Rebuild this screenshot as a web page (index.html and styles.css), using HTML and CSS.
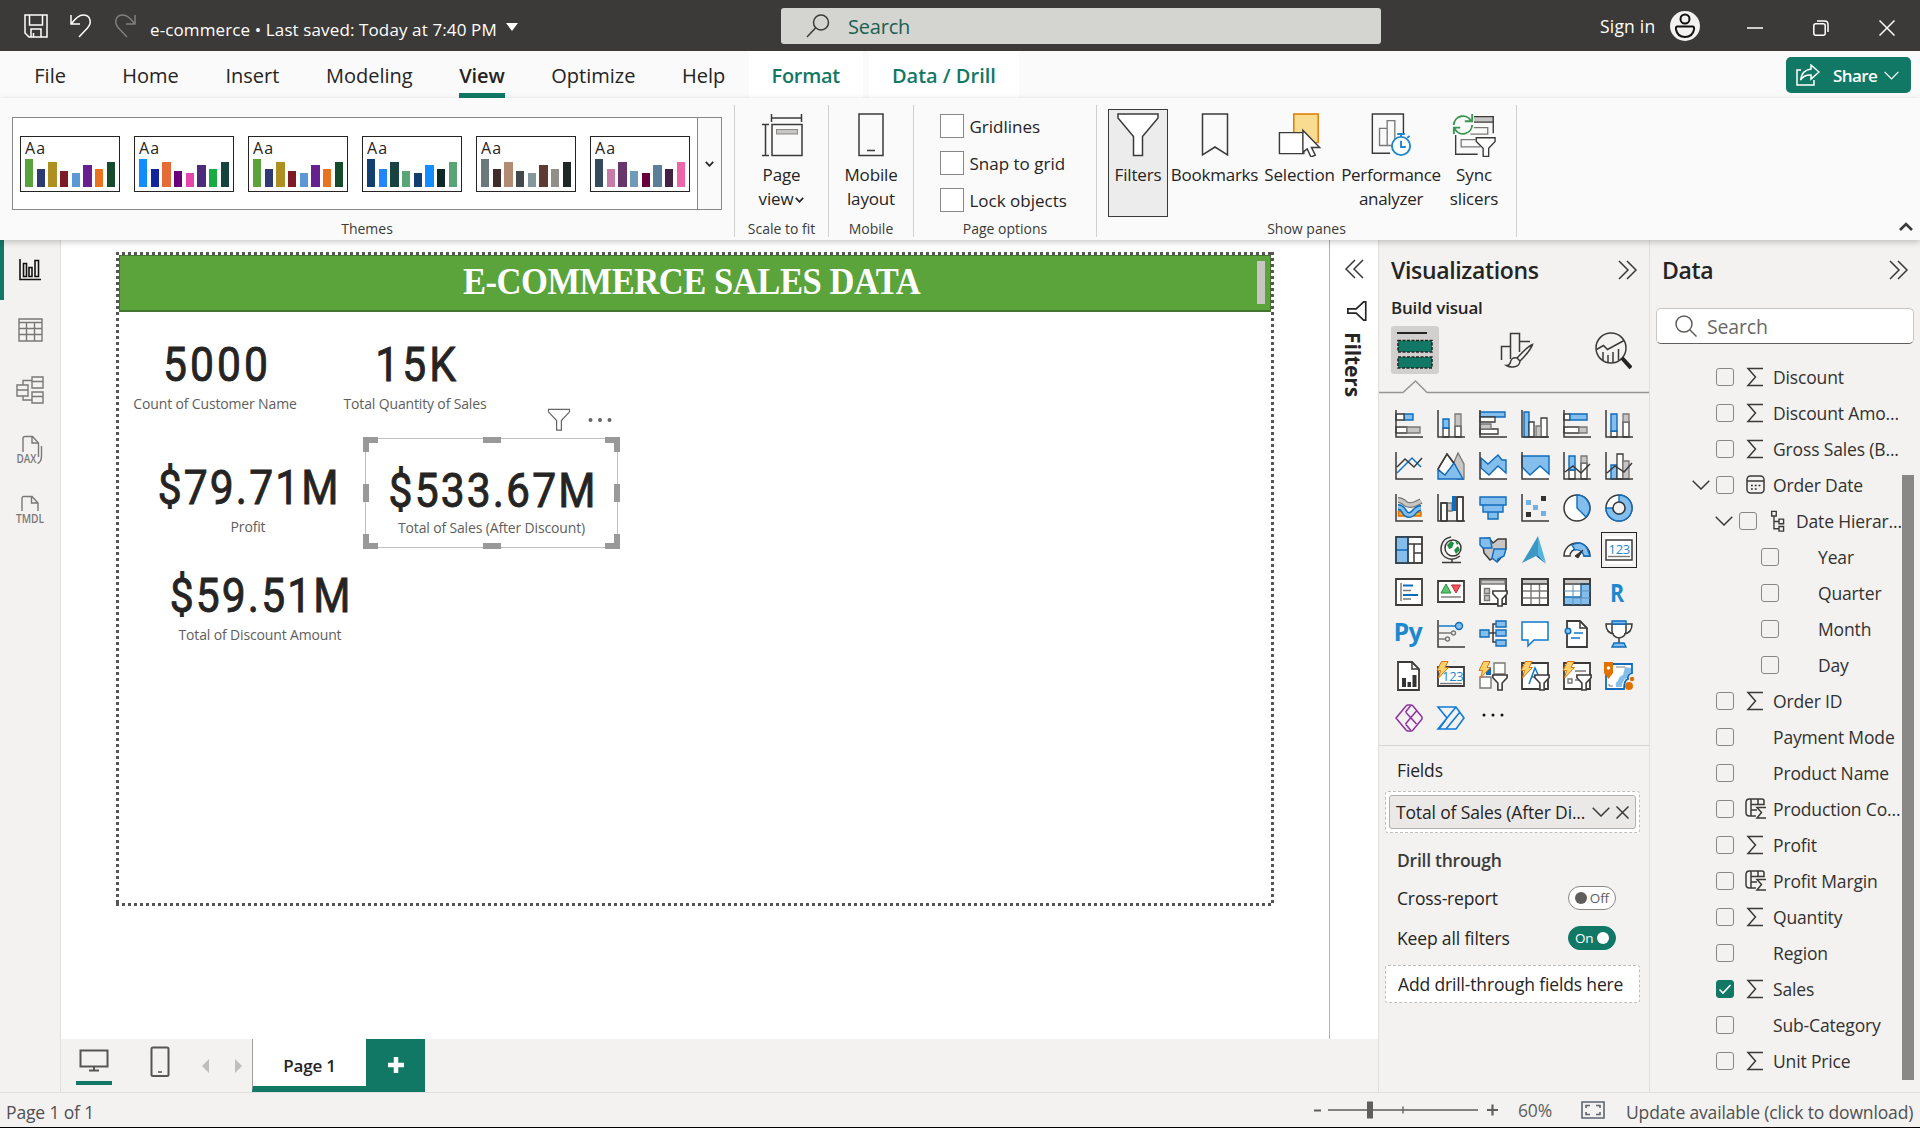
FILE: index.html
```html
<!DOCTYPE html>
<html lang="en">
<head>
<meta charset="utf-8">
<title>e-commerce</title>
<link rel="stylesheet" href="styles.css">
</head>
<body>
<svg class="defs" width="0" height="0" aria-hidden="true">
  <symbol id="sigma" viewBox="0 0 22 22"><path class="k" d="M18 2.500H3L10.500 11 3 19.500H18"/></symbol>
  <symbol id="chev" viewBox="0 0 18 10"><path class="k" d="M.7.7 9 9 17.300.7"/></symbol>
  <symbol id="dbl" viewBox="0 0 20 20"><path class="k" d="M1 1l9 9-9 9M9 1l9 9-9 9"/></symbol>
  <symbol id="measure" viewBox="0 0 22 22"><path class="k" d="M11 18H4.500Q1 18 1 14.500V4.500Q1 1 4.500 1H17q2 0 2 2v3.500H6M6 1v17M6 12h6M13 1v5.500M21 9.500h-9l4.500 5-4.500 5.500h9"/></symbol>
  <symbol id="funnel" viewBox="0 0 24 24"><path d="M1 1.500h22v2.500l-8.500 9v10h-5v-10L1 4z"/></symbol>
  <symbol id="bolt" viewBox="0 0 14 18"><path d="M5.500.5H12L9 6.500h3.500L2.500 17l2-7.500H1z" fill="#fbd16b" stroke="#d9730d"/></symbol>
  <symbol id="minifunnel" viewBox="0 0 15 16"><path d="M.8 1h13.400v2.500L9.500 8.500V15h-4V8.500L.8 3.500z" fill="#fff" stroke="#3b3a39" stroke-width="1.500"/></symbol>
</svg>

<header class="titlebar">
  <div class="quick">
    <svg width="24" height="24" viewBox="0 0 24 24"><path class="w" d="M1 1h22v22H5l-4-4zM5.500 1v10h13V1M7 23v-8h10v8M9.500 19v4"/></svg>
    <svg width="22" height="24" viewBox="0 0 22 24"><path class="w" d="M1 1v9h9M1.500 9.500Q8 1 13 1c8 0 9 8 4.500 13L9 23"/></svg>
    <svg class="dim" width="22" height="24" viewBox="0 0 22 24"><path class="w" d="M21 1v9h-9M20.500 9.500Q14 1 9 1C1 1 0 9 4.500 14L13 23"/></svg>
  </div>
  <div class="doc">e-commerce • Last saved: Today at 7:40 PM</div>
  <i class="tri"></i>
  <div class="topsearch">
    <svg width="24" height="24" viewBox="0 0 24 24"><circle class="k" cx="15" cy="8.500" r="7.500"/><path class="k" d="M9.500 14 1 23"/></svg>
    <span>Search</span>
  </div>
  <div class="signin">Sign in</div>
  <svg class="avatar" width="30" height="30" viewBox="0 0 30 30"><circle cx="15" cy="15" r="15" fill="#f3f2f1"/><g fill="none" stroke="#111" stroke-width="2"><circle cx="15" cy="8" r="4.500"/><path d="M7.500 15.500h15q2 0 1.500 3c-1 5-4.500 7.500-9 7.500s-8-2.500-9-7.500q-.5-3 1.500-3z"/></g></svg>
  <svg class="winmin" width="16" height="16" viewBox="0 0 16 16"><path class="w" d="M0 8h16"/></svg>
  <svg class="winmax" width="16" height="16" viewBox="0 0 16 16"><rect class="w" x=".8" y="3.800" width="11.400" height="11.400" rx="2"/><path class="w" d="M4 1h7.500q3.500 0 3.500 3.500V12"/></svg>
  <svg class="winclose" width="16" height="16" viewBox="0 0 16 16"><path class="w" d="M.5.500l15 15M15.500.500l-15 15"/></svg>
</header>

<nav class="tabs">
  <span>File</span><span>Home</span><span>Insert</span><span>Modeling</span><span class="active">View</span><span>Optimize</span><span>Help</span>
  <span class="ctx">Format</span><span class="ctx">Data / Drill</span>
  <button class="share"><svg width="24" height="22" viewBox="0 0 24 22"><path class="w" d="M5 6H1v15h17v-5M15 1l8 7-8 7v-4q-7-.5-10.500 5Q6 6 15 5z"/></svg>Share<svg width="15" height="9" viewBox="0 0 18 10"><path class="w" d="M.7.700 9 9 17.300.700"/></svg></button>
</nav>

<section class="ribbon">
  <div class="group themes">
    <div class="gallery">
      <div class="theme"><b>Aa</b><div class="bars"><i style="background:#5aa33a"></i><i style="background:#2e3a71"></i><i style="background:#ae9022"></i><i style="background:#7d1c27"></i><i style="background:#5c98d6"></i><i style="background:#662090"></i><i style="background:#e97320"></i><i style="background:#154a2c"></i></div></div>
      <div class="theme"><b>Aa</b><div class="bars"><i style="background:#118dff"></i><i style="background:#12239e"></i><i style="background:#e66c37"></i><i style="background:#6b007b"></i><i style="background:#e645ab"></i><i style="background:#4a2c7a"></i><i style="background:#1aab40"></i><i style="background:#15443d"></i></div></div>
      <div class="theme"><b>Aa</b><div class="bars"><i style="background:#5aa33a"></i><i style="background:#2e3a71"></i><i style="background:#ae9022"></i><i style="background:#7d1c27"></i><i style="background:#5c98d6"></i><i style="background:#662090"></i><i style="background:#e97320"></i><i style="background:#154a2c"></i></div></div>
      <div class="theme"><b>Aa</b><div class="bars"><i style="background:#123f70"></i><i style="background:#2486ff"></i><i style="background:#1a433f"></i><i style="background:#59a576"></i><i style="background:#123f70"></i><i style="background:#118dff"></i><i style="background:#0b2a27"></i><i style="background:#59a576"></i></div></div>
      <div class="theme"><b>Aa</b><div class="bars"><i style="background:#6b787b"></i><i style="background:#3d2c29"></i><i style="background:#b18c72"></i><i style="background:#42494a"></i><i style="background:#85979d"></i><i style="background:#5e3a33"></i><i style="background:#928f88"></i><i style="background:#1f2626"></i></div></div>
      <div class="theme"><b>Aa</b><div class="bars"><i style="background:#344b5b"></i><i style="background:#c77ba7"></i><i style="background:#69366c"></i><i style="background:#6f9bb8"></i><i style="background:#67003a"></i><i style="background:#5c7f99"></i><i style="background:#432144"></i><i style="background:#ee64a9"></i></div></div>
      <div class="more"><svg width="9" height="6" viewBox="0 0 9 6"><path class="k2" d="M.8.800l3.700 4 3.700-4"/></svg></div>
    </div>
    <em>Themes</em>
  </div>
  <div class="group scale">
    <div class="btn">
      <svg width="42" height="44" viewBox="0 0 42 44"><path class="k" d="M10.500 1v8M40.500 1v8M10.500 5h30M1 11.500h7M1 42.500h7M4.500 11.500v31M11 11.500h30v31H11z"/><rect x="15.500" y="16.500" width="21" height="4.500" fill="#c8c6c4" stroke="#8a8886"/></svg>
      <span>Page<br>view<svg class="tiny" width="9" height="6" viewBox="0 0 9 6"><path class="k2" d="M.8.800l3.700 4 3.700-4"/></svg></span>
    </div>
    <em>Scale to fit</em>
  </div>
  <div class="group mobile">
    <div class="btn">
      <svg width="28" height="44" viewBox="0 0 28 44"><path class="k" d="M2 1h24v41.500H2zM10 37.500h8"/></svg>
      <span>Mobile<br>layout</span>
    </div>
    <em>Mobile</em>
  </div>
  <div class="group options">
    <div class="opts">
      <label><i></i>Gridlines</label>
      <label><i></i>Snap to grid</label>
      <label><i></i>Lock objects</label>
    </div>
    <em>Page options</em>
  </div>
  <div class="group panes">
    <div class="btns">
      <div class="btn on"><svg width="42" height="44" viewBox="0 0 42 44"><path class="k" fill="#fff" d="M1 1h40v4L25.500 23.500V42.500h-9V23.500L1 5z"/></svg><span>Filters</span></div>
      <div class="btn b2"><svg width="28" height="44" viewBox="0 0 28 44"><path class="k" d="M1.500 1h25v41L14 34 1.500 42z"/></svg><span>Bookmarks</span></div>
      <div class="btn b3"><svg width="46" height="46" viewBox="0 0 46 46"><path d="M16.500 1H42v30H16.500z" fill="#f9dc8f" stroke="#e07800" stroke-width="1.500"/><path d="M1.500 20.500H27v22H1.500z" fill="#fff" class="k"/><path d="M26 18l17.500 18H35l4 8-4.500 2-4-8.500L26 41z" fill="#fff" class="k"/></svg><span>Selection</span></div>
      <div class="btn b4"><svg width="42" height="46" viewBox="0 0 42 46"><path class="k" d="M20 42H1.500V1H34v20"/><path class="g" d="M9 16h8v18H9zM17 8h8v26h-8z"/><circle cx="31.500" cy="34.500" r="9.500" fill="#fff" stroke="#1e88cf" stroke-width="2"/><path d="M31.500 29v6.500h5M27.500 22h8M31.500 22v3M38 26l2.500-2" fill="none" stroke="#1e88cf" stroke-width="2"/></svg><span>Performance<br>analyzer</span></div>
      <div class="btn b5"><svg width="48" height="48" viewBox="0 0 48 48"><path fill="#c8c6c4" d="M24 4h21v6H24z"/><path class="k" d="M24 4h21v18M24 10h21M4 24v21h24"/><path class="g" d="M24 16h15v7H20M31 37H10v-8h16"/><path d="M2 13A10 10 0 0 1 21 9M22 1v8h-8M22 13A10 10 0 0 1 3 17M2 23v-7h7" fill="none" stroke="#3a9650" stroke-width="2"/><path fill="#fff" class="k" d="M26.500 27H47v4l-7 7.500V47.500h-6V38.500l-7.500-7.500z"/></svg><span>Sync<br>slicers</span></div>
    </div>
    <em>Show panes</em>
  </div>
  <svg class="collapse" width="14" height="9" viewBox="0 0 14 9"><path d="M1 8l6-6 6 6" fill="none" stroke="#3b3a39" stroke-width="2.600"/></svg>
</section>

<main class="work">
  <aside class="rail">
    <div class="ri cur"><svg width="22" height="22" viewBox="0 0 22 22"><path d="M1 0v20.500h21M4.500 4.500h3v13h-3zM10 8.500h3v9h-3zM16 1.500h3.500v16H16z" fill="none" stroke="#111" stroke-width="1.600"/></svg></div>
    <div class="ri"><svg width="25" height="24" viewBox="0 0 25 24"><path class="g" d="M1 1h23v22H1zM1 4.500h23M1 10.500h23M1 16.500h23M8.500 4.500V23M16.500 4.500V23"/></svg></div>
    <div class="ri"><svg width="28" height="28" viewBox="0 0 28 28"><path class="g" d="M1 9h11v11H1zM1 14h11M16 1h11v11H16zM16 5.500h11M16 16h11v11H16zM16 20.500h11M7 9V4.500h9M7 20v4h9"/></svg></div>
    <div class="ri"><svg width="28" height="30" viewBox="0 0 28 30"><path class="g" d="M7 17V3.500Q7 1.500 9 1.500h7.500l6 6.500V22M16 1.500V8h6.500M25.500 11v10q0 6-4 7.500"/><text x=".5" y="27.500" class="rt" textLength="20" lengthAdjust="spacingAndGlyphs">DAX</text></svg></div>
    <div class="ri"><svg width="30" height="30" viewBox="0 0 30 30"><path class="g" d="M7 16V3.500Q7 1.500 9 1.500h8l6 6.500v8M16.500 1.500V8H23"/><text x="1" y="28" class="rt" textLength="28" lengthAdjust="spacingAndGlyphs">TMDL</text></svg></div>
  </aside>

  <div class="stage">
    <div class="upper">
      <div class="canvas">
        <div class="page">
          <div class="banner"><span>E-COMMERCE SALES DATA</span><i></i></div>
          <div class="kpi c1"><strong>5000</strong><small>Count of Customer Name</small></div>
          <div class="kpi c2"><strong>15K</strong><small>Total Quantity of Sales</small></div>
          <div class="kpi c3 money"><strong>$79.71M</strong><small>Profit</small></div>
          <div class="kpi c4 money sel"><strong>$533.67M</strong><small>Total of Sales (After Discount)</small>
            <i class="tl"></i><i class="tr"></i><i class="bl"></i><i class="br"></i><i class="tm"></i><i class="bm"></i><i class="lm"></i><i class="rm"></i>
            <div class="tools"><svg class="fg" width="24" height="23" viewBox="0 0 24 24"><use href="#funnel"/></svg><svg width="24" height="6" viewBox="0 0 24 6"><g fill="#666"><circle cx="2.500" cy="3" r="2"/><circle cx="12" cy="3" r="2"/><circle cx="21.500" cy="3" r="2"/></g></svg></div>
          </div>
          <div class="kpi c5 money"><strong>$59.51M</strong><small>Total of Discount Amount</small></div>
        </div>
      </div>
      <aside class="filters">
        <svg class="flip" width="20" height="20"><use href="#dbl"/></svg>
        <svg class="ff" width="20" height="20" viewBox="0 0 24 24"><use href="#funnel"/></svg>
        <span>Filters</span>
      </aside>
    </div>
    <div class="pagebar">
      <div class="view"><svg width="30" height="24" viewBox="0 0 30 24"><path d="M1.500 1.500h27v16h-27zM15 17.500V21M10 21.500h10" fill="none" stroke="#555" stroke-width="2"/></svg></div>
      <svg class="phone" width="20" height="32" viewBox="0 0 20 32"><rect x="1.500" y="1.500" width="17" height="28.500" rx="1.500" fill="none" stroke="#555" stroke-width="2"/><path d="M8 26h4" stroke="#555" stroke-width="1.500"/></svg>
      <i class="arr l"></i><i class="arr r"></i>
      <div class="ptab">Page 1</div>
      <div class="plus"><svg width="18" height="18" viewBox="0 0 18 18"><path d="M9 1v16M1 9h16" stroke="#fff" stroke-width="4.500"/></svg></div>
    </div>
  </div>

  <aside class="vis">
    <div class="phead"><h2>Visualizations</h2><svg width="20" height="20"><use href="#dbl"/></svg></div>
    <h3>Build visual</h3>
    <div class="modes">
      <div class="mode"><svg width="36" height="38" viewBox="0 0 36 38"><path d="M0 2h30" stroke="#252423" stroke-width="2"/><g fill="#117865" stroke="#252423" stroke-width="1.600" stroke-dasharray="3 1.500"><path d="M1 9.500h34V21H1zM1 26h34v11H1z"/></g></svg></div>
      <svg width="34" height="36" viewBox="0 0 34 36"><path class="k" d="M1.500 28V14.500h9V27M10.500 24V1.500h9V20M19.500 9.500H30"/><path class="k" fill="#f3f2f1" d="M32.500 12.500Q28 14 17 26l3 3Q31 18 32.500 12.500zM17 26c-4-1-6 1-6.500 4-.5 2-2 3.500-4 3.500 4 2.500 13 2.500 13.500-4.500"/></svg>
      <svg width="37" height="37" viewBox="0 0 37 37"><circle class="k" cx="16" cy="16" r="15"/><path class="k" d="M1.500 17.500l7-4 4 4L29 8.500M8 20v8M13 23v7M18 20v10.500M23.500 17v11"/><path d="M27 26l9 10" stroke="#252423" stroke-width="4"/></svg>
    </div>
    <svg class="notch" width="270" height="14" viewBox="0 0 270 14"><path d="M0 12.500H24L36.500 1 48 12.500H270" fill="none" stroke="#979593" stroke-width="1.500"/></svg>
    <div class="gal">
      <svg viewBox="0 0 28 28"><path class="b" d="M9 4h9v6H9z"/><path class="x" d="M1 4h8v6H1zM1 17h11v6H1z"/><path class="y" d="M12 17h13v6H12z"/><path class="k" d="M1 0v27h27"/></svg>
      <svg viewBox="0 0 28 28"><path class="x" d="M6 18h6v9H6zM18 16h6v11h-6z"/><path class="b" d="M6 9h6v9H6z"/><path class="y" d="M18 4h6v12h-6z"/><path class="k" d="M1 0v27h27"/></svg>
      <svg viewBox="0 0 28 28"><path class="b" d="M1 2h25v5H1z"/><path class="x" d="M1 7h15v5H1zM1 19h18v5H1z"/><path class="y" d="M1 14h11v5H1z"/><path class="k" d="M1 0v27h27"/></svg>
      <svg viewBox="0 0 28 28"><path class="b" d="M3 2h5v25H3z"/><path class="x" d="M8 12h5v15H8zM20 8h6v19h-6z"/><path class="y" d="M15 16h5v11h-5z"/><path class="k" d="M1 0v27h27"/></svg>
      <svg viewBox="0 0 28 28"><path class="x" d="M1 4h6v6H1zM1 17h15v6H1z"/><path class="b" d="M7 4h17v6H7z"/><path class="y" d="M16 17h8v6h-8z"/><path class="k" d="M1 0v27h27"/></svg>
      <svg viewBox="0 0 28 28"><path class="x" d="M6 21h6v6H6zM18 12h6v15h-6z"/><path class="b" d="M6 4h6v17H6z"/><path class="y" d="M18 4h6v8h-6z"/><path class="k" d="M1 0v27h27"/></svg>

      <svg viewBox="0 0 28 28"><path class="bl" d="M2 21 17 6l9 9"/><path class="k" d="M2 15l8-8 9 8 8-9M1 0v27h27"/></svg>
      <svg viewBox="0 0 28 28"><path class="y" d="M14 17l7-16 6 11v15h-7z"/><path class="x" d="M1 17 10 2l8 11-9 12z"/><path class="b" d="M1 18l7 5 9-12 9 16H1z"/><path class="k" d="M1 17 10 2l7 9"/></svg>
      <svg viewBox="0 0 28 28"><path fill="#fff" d="M2 16l7 7 9-9 9 8v5H2z"/><path class="b" d="M2 6l7 6 10-9 4 5h4v13l-8-7-9 9-8-7z"/><path class="k" d="M1 0v27h27"/></svg>
      <svg viewBox="0 0 28 28"><path fill="#fff" d="M2 16l7 7 10-9 8 8v5H2z"/><path class="b" d="M1 4h27v18l-9-8-10 9-8-8z"/><path class="k" d="M1 0v27h27"/></svg>
      <svg viewBox="0 0 28 28"><path class="x" d="M6 18h6v9H6zM18 11h6v16h-6z"/><path class="b" d="M6 4h6v14H6z"/><path class="y" d="M18 4h6v7h-6z"/><path class="k" d="M2 20l8-6 8 7 9-9M1 0v27h27"/></svg>
      <svg viewBox="0 0 28 28"><path class="b" d="M6 13h6v14H6z"/><path class="x" d="M12 2h6v25h-6z"/><path class="y" d="M18 9h6v18h-6z"/><path class="k" d="M2 21l8-7 9 6 8-9M1 0v27h27"/></svg>

      <svg viewBox="0 0 28 28"><path d="M3.500 5.500h4l3 4M3.500 17h6v5h-6zM19 18h7v4h-7z" fill="#f9a825" stroke="#e07000" stroke-width="1.500"/><path d="M3 6q4 0 8 4 5 3 15-3" fill="none" stroke="#7a7876" stroke-width="6"/><path d="M3 6q4 0 8 4 5 3 15-3" fill="none" stroke="#c8c6c4" stroke-width="3.500"/><path d="M3 13c7 0 5 8 11 8s5-7 12-7" fill="none" stroke="#0f6cbd" stroke-width="6"/><path d="M3 13c7 0 5 8 11 8s5-7 12-7" fill="none" stroke="#83beec" stroke-width="3"/><path class="k" d="M1 0v27h27"/></svg>
      <svg viewBox="0 0 28 28"><path class="x" d="M4 9h6v18H4zM20 3h6v24h-6z"/><path class="y" d="M10 9h5v8h-5z"/><path d="M15 2h4v15h-4z" fill="#0f6cbd"/><path class="k" d="M4 27V9h6v18M20 27V3h6v24M1 0v27h27"/></svg>
      <svg viewBox="0 0 28 28"><path class="b" d="M1 3h26v8H1zM4 11h20v7H4zM9 18h10v7H9z"/></svg>
      <svg viewBox="0 0 28 28"><path class="k" d="M1 0v27h27"/><path fill="#333" d="M20 2h5v5h-5zM5 18h5v5H5z"/><path fill="#70b2e6" d="M5 6h5v5H5zM12 11h5v5h-5zM20 17h5v5h-5z"/></svg>
      <svg viewBox="0 0 28 28"><circle class="k" fill="#fff" cx="14" cy="14" r="13"/><path class="b" d="M14 1v13l9 9A13 13 0 0 0 14 1z"/></svg>
      <svg viewBox="0 0 28 28"><circle class="k" cx="14" cy="14" r="13" fill="#fff"/><path class="b" d="M14 1A13 13 0 1 1 1 14h7a6 6 0 1 0 6-6z"/><circle class="k" cx="14" cy="14" r="6" fill="#f3f2f1"/></svg>

      <svg viewBox="0 0 28 28"><path class="x" d="M1 1h26v26H1z"/><path class="b" d="M1 1h12v13H1zM1 14h12v13H1z"/><path class="k" d="M1 1h26v26H1zM13 8h14M13 1v26M19 8v19M19 17h8"/></svg>
      <svg viewBox="0 0 28 28"><circle class="k" cx="16" cy="12" r="8" fill="#fff"/><path d="M10 9l4-4 3 2-2 5-3 1zM17 14l4-4 2 4-4 4zM18 5l4 2-2 2z" fill="#1f8f43"/><path class="k" d="M14 1C2 3 2 17 8 21q7 5 15-1M15 23v4M5 26.500h19"/></svg>
      <svg viewBox="0 0 28 28"><path class="k" fill="#c8c6c4" d="M2 3l8-1 4 5 5-4h8v9l-2 6-6 7-5-3-3 2-6-7-1-7z"/><path class="b" d="M1 2h10l2 10H4L1 9zM15 13h12l-2 7-6 3-1 3-5-4z"/></svg>
      <svg viewBox="0 0 28 28"><path d="M17 0 1 27l16-8z" fill="#3c97c5"/><path d="M17 0v19l8 8z" fill="#52b5dd"/><path d="M17 19l8 9-10-8z" fill="#0f6cbd"/></svg>
      <svg viewBox="0 0 28 28"><path class="k" fill="#fff" d="M1 20A13 13 0 0 1 27 20h-6a7 7 0 0 0-14 0z"/><path class="b" d="M9 9Q18 4 24 12l3 8h-6q-2-7-9-6z"/><path d="M12 20l8-6-5 8z" fill="#333" stroke="#333"/></svg>
      <svg class="picked" viewBox="0 0 28 28"><path class="k" d="M1 4h26v20H1z" fill="#fff" stroke-width="2"/><text x="3.500" y="17.500" class="n">123</text><path class="g" d="M3 20.500h22"/></svg>

      <svg viewBox="0 0 28 28"><path class="x kk" d="M1 1h26v26H1z"/><path class="g" d="M6 5v18M8 12.500h8M8 21h8"/><path d="M8 7.500h10M8 17h15" stroke="#0f6cbd" stroke-width="2"/></svg>
      <svg viewBox="0 0 28 28"><path class="x kk" d="M1 3h26v21H1z"/><path d="M4 15l5-9 5 9z" fill="#5ac46f" stroke="#2a8f42"/><path d="M14.500 7h9l-4.500 8z" fill="#f0545c" stroke="#c0272f"/><path class="g" d="M4 19h20"/></svg>
      <svg viewBox="0 0 28 28"><path class="x kk" d="M1 1h26v25H1z"/><path class="g" fill="#c8c6c4" d="M2 2h24v4H2zM5.500 10.500h5v5h-5zM5.500 17.500h5v5h-5z"/><use href="#minifunnel" x="13" y="12" width="16" height="17"/></svg>
      <svg viewBox="0 0 28 28"><path class="x kk" d="M1 1h26v26H1z"/><path class="g" d="M1 13h26M1 20h26M10 6v21M18.500 6v21"/><path fill="#c8c6c4" d="M2 2h24v4H2z"/><path class="k" d="M1 1h26v26H1zM1 6h26"/></svg>
      <svg viewBox="0 0 28 28"><path class="x kk" d="M1 1h26v26H1z"/><path class="b" d="M18 6h9v21H1v-8h17z"/><path class="k" d="M1 1h26v26H1zM1 6h26"/><path d="M1 13h26M10 6v21M18 13v14M10 20h17" stroke="#5f8db2"/><path fill="#c8c6c4" d="M2 2h24v3H2z"/></svg>
      <svg viewBox="0 0 28 28"><text x="5" y="23.500" class="lang" textLength="14" lengthAdjust="spacingAndGlyphs">R</text></svg>

      <svg viewBox="0 0 28 28"><text x="-1.500" y="20.500" class="lang" textLength="29">Py</text></svg>
      <svg viewBox="0 0 28 28"><path class="k" d="M1 0v27h27"/><path class="bl" d="M2 6h17"/><circle class="b" cx="22" cy="6" r="3.500"/><path class="g" d="M2 13h13M2 19h7"/><circle class="g" cx="16.500" cy="13" r="2"/><circle class="g" cx="10.500" cy="19" r="2"/></svg>
      <svg viewBox="0 0 28 28"><path class="k" d="M10 13h8M17 4h-3v18h3"/><path class="b" d="M1 10h9v7H1zM17 1h10v6H17zM17 10h10v6H17zM17 20h10v6H17z"/></svg>
      <svg viewBox="0 0 28 28"><path class="bl" fill="#fff" d="M1 2h26v18H13l-6 6v-6H1z"/></svg>
      <svg viewBox="0 0 28 28"><path class="x kk" d="M4 1h13l7 7v19H4z"/><path class="k" d="M17 1v7h7"/><path class="bl" d="M11 13h9M8 18h9"/><circle class="b" cx="5" cy="11" r="2.800"/></svg>
      <svg viewBox="0 0 28 28"><path class="k" fill="#fff" d="M7 4H1q0 9 8 10M21 4h6q0 9-8 10M7 4v7c0 4 2 6 7 7 5-1 7-3 7-7V4zM14 18v6"/><path class="b" d="M7 1h14v3H7zM9 23h10l2 4H7z"/></svg>

      <svg viewBox="0 0 28 28"><path class="x kk" d="M3 0h14l7 7v21H3z"/><path class="k" d="M17 0v7h7"/><path fill="#333" d="M7 16h4v9H7zM12.500 20h3.500v5h-3.500zM17.500 13h4v12h-4z"/></svg>
      <svg viewBox="0 0 28 28"><path class="x kk" d="M1 5h26v19H1z"/><text x="5" y="18.500" class="n">123</text><path class="g" d="M3 21.500h22"/><use href="#bolt" x="-1" y="-1" width="14" height="18"/></svg>
      <svg viewBox="0 0 28 28"><path class="g" fill="#fff" d="M15 1h11v11H15zM1 15h11v11H1z"/><path d="M7 5h5v8H7z" fill="#0f6cbd"/><use href="#bolt" x="-1" y="-1" width="14" height="18"/><use href="#minifunnel" x="13" y="12" width="16" height="17"/></svg>
      <svg viewBox="0 0 28 28"><path class="x kk" d="M1 1h26v26H1z"/><path class="bl" d="M8 22l6-16 5 11M10 15h8"/><use href="#bolt" x="-1" y="-1" width="14" height="18"/><use href="#minifunnel" x="13" y="12" width="16" height="17"/></svg>
      <svg viewBox="0 0 28 28"><path class="x kk" d="M1 1h26v26H1z"/><path class="g" d="M12 9h11M5 17h4v4H5zM12 18h5"/><use href="#bolt" x="-1" y="-1" width="14" height="18"/><use href="#minifunnel" x="13" y="12" width="16" height="17"/></svg>
      <svg viewBox="0 0 28 28"><path d="M1 2h26v9q-5 1-4 6-4 1-4 10H1z" fill="#fff" stroke="#0f6cbd" stroke-width="1.800"/><path fill="#83beec" d="M20 5l6 1v5q-4 1-4 5-5 2-5 9h-6q-1-5 2-6 1-5 5-6z"/><path d="M4 22v2h4M11 5h9" fill="none" stroke="#7a7876"/><path fill="#e07000" d="M-1 0h9v11l-4.500 6L-1 11z"/><circle cx="3.500" cy="6" r="1.800" fill="#fff"/><circle cx="24" cy="24" r="4" fill="#e07000"/><circle cx="27" cy="17" r="2.300" fill="#e07000"/></svg>

      <svg viewBox="0 0 28 28"><path d="M1 14 11 2q1-1 2-1h3q1 0 2 1l9 11v2l-9 11q-1 1-2 1h-3q-1 0-2-1zM10.500 8l5-6M10.500 8l11 12M15.500 14l6-7M15.500 14l-5 6M10.500 20l5 6" fill="none" stroke="#8f2fa0" stroke-width="1.500"/></svg>
      <svg viewBox="0 0 28 28"><path d="M1 3h18l8 11-8 11H1l9-11zM10 14 19 3M2 25 10 14M9 25 23 8" fill="none" stroke="#0f7ad8" stroke-width="1.600"/></svg>
      <svg viewBox="0 0 28 28"><g fill="#111"><circle cx="5" cy="11" r="1.500"/><circle cx="14" cy="11" r="1.500"/><circle cx="23" cy="11" r="1.500"/></g></svg>
    </div>
    <div class="wells">
      <div class="lab">Fields</div>
      <div class="drop"><div class="chip"><span>Total of Sales (After Di...</span><svg width="18" height="10"><use href="#chev"/></svg><svg width="13" height="13" viewBox="0 0 13 13"><path class="k" d="M.5.500l12 12M12.500.500l-12 12"/></svg></div></div>
      <div class="lab semi">Drill through</div>
      <div class="row"><span>Cross-report</span><div class="tog"><i></i>Off</div></div>
      <div class="row r2"><span>Keep all filters</span><div class="tog on">On<i></i></div></div>
      <div class="add">Add drill-through fields here</div>
    </div>
  </aside>

  <aside class="data">
    <div class="phead"><h2>Data</h2><svg width="20" height="20"><use href="#dbl"/></svg></div>
    <div class="dsearch"><svg width="22" height="22" viewBox="0 0 22 22"><circle cx="9" cy="9" r="8" fill="none" stroke="#605e5c" stroke-width="1.500"/><path d="M15 15l6.500 6.500" stroke="#605e5c" stroke-width="1.500"/></svg><span>Search</span></div>
    <div class="listwrap">
      <ul class="list">
        <li><i></i><svg><use href="#sigma"/></svg>Discount</li>
        <li><i></i><svg><use href="#sigma"/></svg>Discount Amo...</li>
        <li><i></i><svg><use href="#sigma"/></svg>Gross Sales (B...</li>
        <li><svg class="cv"><use href="#chev"/></svg><i></i><svg viewBox="0 0 22 22"><rect class="k" x="2" y="2" width="17" height="17" rx="3.500"/><path class="k" d="M2 7h17"/><path d="M6 11.500h10M6 15h7" stroke="#252423" stroke-width="1.700" stroke-dasharray="1.800 2"/></svg>Order Date</li>
        <li class="in1"><svg class="cv"><use href="#chev"/></svg><i></i><svg viewBox="0 0 22 24"><path class="k" d="M3 1.500h5v5H3zM11 10h5v5h-5zM11 18h5v5h-5zM5.500 6.500v14H11M5.500 12.500H11"/></svg>Date Hierar...</li>
        <li class="in2"><i></i><svg></svg>Year</li>
        <li class="in2"><i></i><svg></svg>Quarter</li>
        <li class="in2"><i></i><svg></svg>Month</li>
        <li class="in2"><i></i><svg></svg>Day</li>
        <li><i></i><svg><use href="#sigma"/></svg>Order ID</li>
        <li><i></i><svg></svg>Payment Mode</li>
        <li><i></i><svg></svg>Product Name</li>
        <li><i></i><svg><use href="#measure"/></svg>Production Co...</li>
        <li><i></i><svg><use href="#sigma"/></svg>Profit</li>
        <li><i></i><svg><use href="#measure"/></svg>Profit Margin</li>
        <li><i></i><svg><use href="#sigma"/></svg>Quantity</li>
        <li><i></i><svg></svg>Region</li>
        <li><i class="chk"><svg class="ck" viewBox="0 0 18 18"><path d="M3.500 9.500l3.500 3.500 7.500-8" fill="none" stroke="#fff" stroke-width="1.600"/></svg></i><svg><use href="#sigma"/></svg>Sales</li>
        <li><i></i><svg></svg>Sub-Category</li>
        <li><i></i><svg><use href="#sigma"/></svg>Unit Price</li>
      </ul>
      <div class="scroll"></div>
    </div>
  </aside>
</main>

<footer class="status">
  <span class="pn">Page 1 of 1</span>
  <svg class="zoom" width="188" height="20" viewBox="0 0 188 20"><path d="M1 10.500h7M174 10h11M179.500 4.500v11" stroke="#605e5c" stroke-width="2.200"/><path d="M15 10h150M90 6.500v7" stroke="#605e5c" stroke-width="1.300"/><path d="M57 1.500v17" stroke="#605e5c" stroke-width="6"/></svg>
  <span class="pct">60%</span>
  <svg class="fit" width="24" height="18" viewBox="0 0 24 18"><path d="M1 1h22v16H1zM5 7V4.500h4M15 4.500h4V7M19 11v2.500h-4M9 13.500H5V11" fill="none" stroke="#5a6670" stroke-width="1.600"/></svg>
  <span class="upd">Update available (click to download)</span>
</footer>
</body>
</html>
```
FILE: styles.css
```css
* { box-sizing: border-box; }
body {
  margin: 0; width: 1920px; height: 1128px; overflow: hidden;
  display: flex; flex-direction: column;
  font-family: "Open Sans", "Noto Sans", sans-serif; font-size: 18px; letter-spacing: -0.15px;
  color: #252423; background: #fff; white-space: nowrap;
}
svg { flex: none; display: block; }
.defs { position: absolute; }
h2, h3, ul { margin: 0; padding: 0; }
i, em { font-style: normal; }

.k { stroke: #3b3a39; stroke-width: 1.500px; }
path.k:not([fill]), circle.k:not([fill]), rect.k:not([fill]) { fill: none; }
.k2 { fill: none; stroke: #252423; stroke-width: 1.700px; }
.g { stroke: #7a7876; stroke-width: 1.400px; }
.g:not([fill]) { fill: none; }
.w { fill: none; stroke: #fff; stroke-width: 1.500px; }
.b { fill: #83beec; stroke: #0f6cbd; stroke-width: 1.400px; }
.bl { stroke: #0f7acb; stroke-width: 1.500px; }
.bl:not([fill]) { fill: none; }
.x { fill: #fff; stroke: #3b3a39; stroke-width: 1.300px; }
.y { fill: #c8c6c4; stroke: #7a7876; stroke-width: 1.300px; }
.kk { stroke-width: 1.800px; }
.n { font: 13px "Open Sans", sans-serif; fill: #1e88cf; letter-spacing: -0.3px; }
.lang { font: 700 25px "Open Sans", sans-serif; fill: #1e88cf; }
.rt { font: 600 12px "Open Sans", sans-serif; fill: #7a7876; letter-spacing: 0; }

/* title bar */
.titlebar { height: 51px; flex: none; background: #3b3a38; color: #fff; display: flex; align-items: center; font-size: 17px; }
.quick { display: flex; gap: 22px; margin-left: 24px; width: 126px; }
.dim { opacity: .35; }
.doc { width: 347px; padding-top: 7px; letter-spacing: 0.12px; }
.tri { margin: 2px 263px 0 9px; border: 6.500px solid transparent; border-top: 8px solid #fff; border-bottom: 0; }
.topsearch { width: 600px; height: 36px; background: #d4d4d1; border-radius: 3px; display: flex; align-items: center; gap: 18px; padding-left: 25px; font-size: 20px; color: #1c5f52; }
.topsearch span { padding-top: 2px; letter-spacing: -0.2px; }
.signin { margin-left: 219px; width: 70px; font-size: 17.500px; letter-spacing: 0.2px; padding-top: 1px; }
.avatar { margin-right: 47px; }
.winmin { margin: 4px 50px 0 0; }
.winmax { margin: 4px 50px 0 0; }
.winclose { margin-top: 4px; }

/* ribbon tabs */
.tabs { height: 47px; flex: none; display: flex; align-items: stretch; background: #fafafa; padding-left: 11px; font-size: 20px; line-height: 47px; letter-spacing: 0; padding-top: 1px; }
.tabs span { padding: 0 23.300px; }
.tabs span:first-child { padding-right: 33px; }
.tabs .active { font-weight: 600; letter-spacing: -0.1px; background: linear-gradient(#117865, #117865) center bottom / 46px 5px no-repeat; }
.tabs .ctx { background: #fff; color: #117865; font-weight: 600; padding: 0 23px; letter-spacing: -0.3px; margin-top: -1px; padding-top: 1px; }
.tabs .ctx + .ctx { margin-left: 6px; letter-spacing: 0; }
.share { margin: 5px 9px 0 auto; width: 125px; height: 36px; padding: 0 0 0 10px; border: 0; border-radius: 5px; background: #117865; color: #fff; font: 600 17px "Open Sans", sans-serif; letter-spacing: -0.6px; display: flex; align-items: center; gap: 7px; }
.share svg:first-child { margin-right: 6px; }

/* ribbon */
.ribbon { height: 142px; flex: none; background: #fafafa; display: flex; padding-top: 7px; position: relative; z-index: 2; box-shadow: 0 2px 6px rgba(0,0,0,.22); font-size: 17px; }
.group { height: 132px; border-right: 1px solid #d2d0ce; position: relative; display: flex; flex-direction: column; align-items: center; }
.group em { margin-top: auto; font-size: 14px; line-height: 16px; letter-spacing: 0; color: #3b3a39; }
.themes { width: 735px; }
.scale { width: 94px; }
.mobile { width: 85px; }
.options { width: 183px; }
.panes { width: 420px; }
.gallery { width: 710px; height: 93px; margin-top: 12px; border: 1px solid #8a8886; background: #fff; display: flex; align-items: center; gap: 14px; padding-left: 7px; }
.theme { width: 100px; height: 56px; border: 1.500px solid #252423; padding: 1px 4px 4px; display: flex; flex-direction: column; justify-content: space-between; }
.theme b { font: 16px/20px "Open Sans", sans-serif; letter-spacing: 1.200px; }
.bars { display: flex; align-items: flex-end; gap: 3.300px; }
.bars i { width: 8.400px; height: 28px; }
.bars i:nth-child(2), .bars i:nth-child(7) { height: 18px; }
.bars i:nth-child(3), .bars i:nth-child(8) { height: 25px; }
.bars i:nth-child(4) { height: 16px; }
.bars i:nth-child(5) { height: 14px; }
.bars i:nth-child(6) { height: 22px; }
.more { flex: 1; margin-left: -7px; align-self: stretch; border-left: 1px solid #8a8886; background: #fafafa; display: grid; place-items: center; }
.btn { display: flex; flex-direction: column; align-items: center; text-align: center; padding-top: 8px; line-height: 24px; }
.btn > svg { margin-bottom: 6px; height: 44px; }
.tiny { display: inline-block; margin: 0 0 2px 2px; }
.opts { width: 131px; margin-top: 9px; display: flex; flex-direction: column; gap: 13px; letter-spacing: 0; }
.opts label { display: flex; align-items: center; gap: 6px; height: 24px; }
.opts i { width: 24px; height: 24px; border: 1px solid #8a8886; background: #fff; }
.btns { display: flex; align-self: stretch; padding-left: 11px; }
.panes .btn { flex: none; margin-top: 4px; padding-top: 4px; height: 108px; overflow: visible; }
.panes .on { width: 60px; border: 1px solid #3b3a39; background: #ececec; padding-top: 3px; }
.b2 { width: 93px; letter-spacing: -.25px; } .b3 { width: 77px; } .b4 { width: 106px; letter-spacing: -.3px; } .b5 { width: 60px; }
.collapse { position: absolute; right: 7px; bottom: 9px; }

/* work area */
.work { flex: 1; min-height: 0; display: flex; background: #f3f2f1; }
.rail { width: 61px; border-right: 1px solid #e1dfdd; }
.ri { height: 60px; display: grid; place-items: center; padding-bottom: 1px; }
.cur { border-left: 4px solid #117865; padding-right: 4px; }
.stage { width: 1317px; display: flex; flex-direction: column; }
.upper { height: 799px; flex: none; display: flex; background: #fff; }
.canvas { width: 1268px; padding: 12px 0 0 55px; }
.page {
  width: 1158px; height: 654px; position: relative; padding: 3px 3px 0 3px;
  background:
    repeating-linear-gradient(90deg, #555 0 3px, transparent 3px 6px) 0 0 / 100% 3px no-repeat,
    repeating-linear-gradient(90deg, #555 0 3px, transparent 3px 6px) 0 100% / 100% 3px no-repeat,
    repeating-linear-gradient(#555 0 3px, transparent 3px 6px) 0 0 / 3px 100% no-repeat,
    repeating-linear-gradient(#555 0 3px, transparent 3px 6px) 100% 0 / 3px 100% no-repeat;
}
.banner { height: 57px; background: #5ba33b; border: 1px solid #44752f; border-bottom-width: 2px; color: #fff; display: flex; align-items: flex-start; justify-content: center; position: relative; font: 700 38px/51px "Liberation Serif", serif; letter-spacing: -0.500px; }
.banner span { transform: scaleX(.909); margin-right: 6px; }
.banner i { position: absolute; right: 5px; top: 5px; width: 8px; height: 43px; background: #c8c6c4; }
.kpi { position: absolute; display: flex; flex-direction: column; align-items: center; }
.kpi strong { font: 400 49px/50px Roboto, sans-serif; letter-spacing: 3.500px; margin-right: -3.500px; transform: scaleX(.87); -webkit-text-stroke: .9px #252423; }
.money strong { letter-spacing: 2.400px; margin-right: -2.400px; }
.kpi small { font-size: 14px; line-height: 20px; color: #605e5c; letter-spacing: -0.15px; margin-top: 4px; }
.c1 { left: 0; width: 198px; top: 88px; }
.c2 { left: 200px; width: 198px; top: 88px; }
.c3 { left: 32px; width: 200px; top: 211px; }
.c4 { left: 247px; width: 257px; top: 185px; height: 112px; padding-top: 29px; }
.c4 small { margin-top: 2px; }
.c5 { left: 44px; width: 200px; top: 319px; }
.sel::before { content: ""; position: absolute; inset: 1px 2px; border: 1px solid #c0c0c0; }
.sel > i { position: absolute; width: 15px; height: 15px; border: 0 solid #999; }
.sel .tl { left: 0; top: 0; border-width: 6px 0 0 6px; } .sel .tr { right: 0; top: 0; border-width: 6px 6px 0 0; }
.sel .bl { left: 0; bottom: 0; border-width: 0 0 6px 6px; } .sel .br { right: 0; bottom: 0; border-width: 0 6px 6px 0; }
.sel .tm, .sel .bm { left: 120px; width: 18px; height: 6px; background: #999; border: 0; } .sel .tm { top: 0; } .sel .bm { bottom: 0; }
.sel .lm, .sel .rm { top: 47px; width: 6px; height: 18px; background: #999; border: 0; } .sel .lm { left: 0; } .sel .rm { right: 0; }
.tools { position: absolute; right: 8px; top: -29px; display: flex; align-items: center; gap: 17px; }
.fg { fill: none; stroke: #666; stroke-width: 1.300px; }
.filters { width: 49px; border-left: 1px solid #b3b0ad; display: flex; flex-direction: column; align-items: center; padding: 19px 0 0 0; }
.flip { transform: scaleX(-1); }
.ff { transform: rotate(90deg); margin: 22px 0 11px 6px; fill: none; stroke: #252423; stroke-width: 2px; }
.filters span { writing-mode: vertical-rl; font-size: 21px; font-weight: 700; letter-spacing: -0.1px; margin-right: 2px; line-height: 30px; }

.pagebar { flex: 1; min-height: 0; display: flex; align-items: center; }
.view { width: 36px; height: 46px; margin: 0 38px 0 15px; padding: 10px 0 0 3px; border-bottom: 4px solid #117865; align-self: flex-start; }
.phone { margin: 0 32px 8px 0; }
.arr { border: 7px solid transparent; }
.l { border-left: 0; border-right: 7px solid #c0bebc; margin-right: 26px; }
.r { border-right: 0; border-left: 7px solid #c0bebc; margin-right: 10px; }
.ptab { width: 114px; align-self: stretch; background: #fff; border-left: 1px solid #a19f9d; border-bottom: 6px solid #117865; text-align: center; font-weight: 600; font-size: 17px; letter-spacing: -0.2px; line-height: 53px; height: 53px; }
.plus { width: 59px; align-self: stretch; background: #117865; display: grid; place-items: center; padding-bottom: 2px; }

/* panes */
.vis { width: 271px; border-left: 1px solid #e1dfdd; }
.phead { display: flex; justify-content: space-between; align-items: center; height: 59px; padding: 0 11px 0 12px; }
.phead h2 { font-size: 23px; font-weight: 600; letter-spacing: -0.35px; }
h3 { font-size: 17px; font-weight: 600; line-height: 24px; letter-spacing: -0.2px; padding: 0 12px; margin-top: -3px; }
.modes { display: flex; align-items: center; justify-content: space-between; padding: 0 17px 0 12px; height: 48px; margin-top: 6px; }
.mode { width: 48px; height: 48px; background: #d2d0ce; border-radius: 3px; display: grid; place-items: center; }
.notch { margin-top: 6px; }
.gal { display: grid; grid-template-columns: repeat(6, 28px); grid-auto-rows: 28px; gap: 14px; padding: 16px 0 0 16px; }
.gal svg { width: 28px; height: 28px; overflow: visible; }
.picked { outline: 1.500px solid #252423; outline-offset: 3px; background: #fff; }
.wells { border-top: 1px solid #d8d6d4; margin-top: 13px; padding: 11px 9px 0 6px; font-size: 17.500px; }
.lab { padding-left: 12px; line-height: 26px; }
.semi { font-weight: 600; letter-spacing: -0.25px; margin-top: 14px; color: #3b3a39; }
.drop { margin-top: 8px; height: 42px; background: #fff; border: 1px dashed #c0bebc; border-radius: 3px; padding: 3px; }
.chip { height: 34px; background: #ebe9e8; border: 1px solid #b3b0ad; border-radius: 3px; display: flex; align-items: center; justify-content: space-between; padding: 0 6px; }
.row { height: 40px; margin-top: 5px; display: flex; justify-content: space-between; align-items: center; padding: 0 24px 0 12px; }
.r2 { margin-top: 0; }
.tog { width: 48px; height: 24px; border: 1px solid #8a8886; border-radius: 12px; background: #fff; display: flex; align-items: center; justify-content: space-between; padding: 0 6px; font-size: 13.500px; color: #605e5c; }
.tog i { width: 12px; height: 12px; border-radius: 50%; background: #605e5c; }
.tog.on { background: #117865; border-color: #117865; color: #fff; }
.tog.on i { background: #fff; }
.add { margin-top: 7px; height: 38px; background: #fff; border: 1px dashed #c0bebc; border-radius: 3px; padding-left: 12px; line-height: 36px; }

.data { width: 271px; border-left: 1px solid #e1dfdd; }
.dsearch { margin: 9px 6px 0 6px; height: 36px; background: #fff; border: 1px solid #c8c6c4; border-bottom: 1.500px solid #605e5c; border-radius: 5px; display: flex; align-items: center; gap: 10px; padding-left: 18px; font-size: 19.500px; color: #6a6866; }
.dsearch span { padding-top: 1px; }
.listwrap { display: flex; justify-content: space-between; margin-top: 15px; }
.list { list-style: none; padding-left: 66px; width: 250px; }
.list li { height: 36px; display: flex; align-items: center; color: #323130; font-size: 17.500px; }
.list li > i { width: 18px; height: 18px; border: 1px solid #8a8886; border-radius: 3px; margin-right: 11px; flex: none; }
.list li > svg { width: 22px; height: 22px; margin-right: 6px; }
.list li > .cv { width: 18px; height: 10px; margin: 0 6px 0 -24px; }
.list .in1 { padding-left: 23px; }
.list .in2 { padding-left: 45px; }
.list li > .chk { background: #117865; border-color: #117865; }
.ck { margin: -1px; width: 18px; height: 18px; }
.scroll { width: 12px; height: 605px; background: #8a8886; margin: 116px 6px 0 0; }

/* status bar */
.status { height: 36px; flex: none; background: #f3f2f1; border-top: 1px solid #e1dfdd; border-bottom: 1px solid #000; display: flex; align-items: center; font-size: 17.500px; color: #505050; padding: 0 6px; }
.zoom { margin-left: auto; }
.pct { margin-left: 17px; width: 63px; color: #605e5c; }
.fit { margin-right: 21px; }
.upd { width: 288px; padding-top: 3px; }
.pn { padding-top: 3px; }
```
